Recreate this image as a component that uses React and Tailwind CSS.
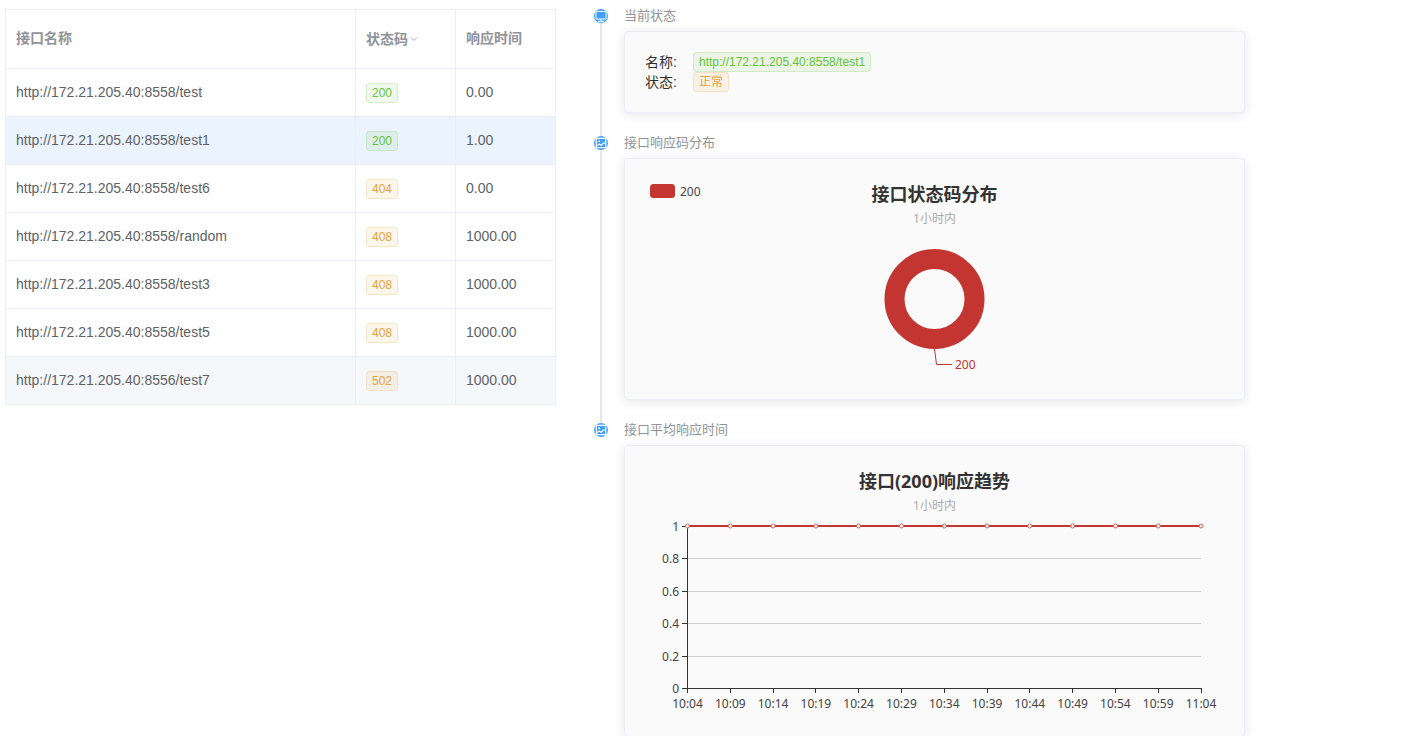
const LATIN = "font-['Liberation_Sans','Noto_Sans_CJK_SC',sans-serif]";

const rows = [
  { url: 'http://172.21.205.40:8558/test', code: 200, time: '0.00' },
  { url: 'http://172.21.205.40:8558/test1', code: 200, time: '1.00', bg: 'bg-[#ebf3ff]' },
  { url: 'http://172.21.205.40:8558/test6', code: 404, time: '0.00' },
  { url: 'http://172.21.205.40:8558/random', code: 408, time: '1000.00' },
  { url: 'http://172.21.205.40:8558/test3', code: 408, time: '1000.00' },
  { url: 'http://172.21.205.40:8558/test5', code: 408, time: '1000.00' },
  { url: 'http://172.21.205.40:8556/test7', code: 502, time: '1000.00', bg: 'bg-[#f5f7fa]' },
];

const times = ['10:04', '10:09', '10:14', '10:19', '10:24', '10:29', '10:34', '10:39', '10:44', '10:49', '10:54', '10:59', '11:04'];
const ticks = [
  { label: '1', y: 60 },
  { label: '0.8', y: 92 },
  { label: '0.6', y: 125 },
  { label: '0.4', y: 157 },
  { label: '0.2', y: 190 },
  { label: '0', y: 222 },
];

function Tag({ type, children }) {
  const tone =
    type === 'success'
      ? 'border-[#67c23a]/20 bg-[#67c23a]/10 text-[#67c23a]'
      : 'border-[#e6a23c]/20 bg-[#e6a23c]/10 text-[#e6a23c]';
  return (
    <span className={`inline-flex h-5 items-center rounded border px-[5px] text-xs whitespace-nowrap ${tone}`}>
      {children}
    </span>
  );
}

function MonitorIcon() {
  return (
    <svg viewBox="0 0 14 14" className="size-3.5" aria-hidden="true">
      <rect x="2" y="2.5" width="10" height="7.5" rx="0.6" fill="none" stroke="#fff" strokeWidth="1" />
      <path d="M7 10v2M4 12.3h6" fill="none" stroke="#fff" strokeWidth="1" />
    </svg>
  );
}

function PictureIcon() {
  return (
    <svg viewBox="0 0 14 14" className="size-3.5" aria-hidden="true">
      <rect x="2.3" y="2.3" width="9.4" height="9.4" rx="0.8" fill="none" stroke="#fff" strokeWidth="1.2" />
      <circle cx="5.2" cy="5.2" r="0.9" fill="#fff" />
      <path d="M3 9.8l2.2-1.9 2 1.5 2.2-2.6 2 .4" fill="none" stroke="#fff" strokeWidth="1.1" />
    </svg>
  );
}

function TimelineItem({ title, icon, last, children }) {
  return (
    <li className="flex gap-4">
      <div className="flex w-3.5 shrink-0 flex-col items-center pt-[3px]">
        <span className="flex size-3.5 shrink-0 items-center justify-center rounded-full bg-[#409eff]">{icon}</span>
        {!last && <span className="-mb-[3px] w-0.5 grow bg-[#e4e7ed]" />}
      </div>
      <section className={`min-w-0 grow ${last ? '' : 'pb-5'}`}>
        <h2 className="mb-[5px] text-[13px] leading-5 text-[#909399]">{title}</h2>
        <div className="rounded border border-[#ebeef5] bg-[#fafafa] p-5 shadow-[0_2px_12px_0_rgba(0,0,0,0.1)]">
          {children}
        </div>
      </section>
    </li>
  );
}

function ChartTitle({ title }) {
  return (
    <g textAnchor="middle">
      <text x="289.5" y="22" fontSize="18" fontWeight="700" fill="#333">{title}</text>
      <text x="289.5" y="44" fontSize="12" fill="#aaa">1小时内</text>
    </g>
  );
}

function PieChart() {
  return (
    <svg viewBox="0 0 579 200" className="block w-full font-['Noto_Sans','Noto_Sans_CJK_SC',sans-serif]" role="img" aria-label="接口状态码分布">
      <rect x="5" y="5" width="25" height="14" rx="3.5" fill="#c23531" />
      <text x="35" y="17" fontSize="12" fill="#444">200</text>
      <ChartTitle title="接口状态码分布" />
      <circle cx="289.5" cy="120" r="40" fill="none" stroke="#c23531" strokeWidth="20" />
      <path d="M289.5 170l2 15.5h15.5" fill="none" stroke="#c23531" />
      <text x="310" y="190" fontSize="12" fill="#c23531">200</text>
    </svg>
  );
}

function TrendChart() {
  const xs = times.map((_, i) => 42.5 + (i * 513.5) / 12);
  return (
    <svg viewBox="0 0 579 250" className="block w-full font-['Noto_Sans','Noto_Sans_CJK_SC',sans-serif]" role="img" aria-label="接口(200)响应趋势">
      <ChartTitle title="接口(200)响应趋势" />
      {ticks.map((t) => (
        <g key={t.label}>
          <path d={`M42 ${t.y + 0.5}H556`} stroke="#ccc" />
          <path d={`M37 ${t.y + 0.5}h5`} stroke="#333" />
          <text x="34" y={t.y + 5} fontSize="12" textAnchor="end" fill="#444">{t.label}</text>
        </g>
      ))}
      <path d="M42.5 60V223M42 222.5H557" stroke="#333" fill="none" />
      {times.map((t, i) => (
        <g key={t}>
          <path d={`M${Math.floor(xs[i]) + 0.5} 223v4`} stroke="#333" />
          <text x={xs[i]} y="242" fontSize="12" textAnchor="middle" fill="#444">{t}</text>
        </g>
      ))}
      <path d="M42.5 60H556" stroke="#c23531" strokeWidth="2" />
      {xs.map((x) => (
        <circle key={x} cx={x} cy="60" r="2" fill="#fff" stroke="#d4605d" strokeWidth="1" />
      ))}
    </svg>
  );
}

export default function App() {
  const cell = 'border-r border-b border-[#ebeef5] px-2.5 pt-0';
  const textCell = `${cell} pb-0.5`;
  return (
    <main className={`flex items-start gap-[38px] bg-white pl-[5px] ${LATIN}`}>
      <table className="mt-[9px] w-[551px] shrink-0 table-fixed border-separate border-spacing-0 border-t border-l border-[#ebeef5] text-left text-sm text-[#606266]">
        <colgroup>
          <col />
          <col className="w-[100px]" />
          <col className="w-[100px]" />
        </colgroup>
        <thead className="text-[#909399]">
          <tr className="h-[59px]">
            <th className={textCell}>接口名称</th>
            <th className={cell}>
              <button type="button" className="flex items-center gap-0.5 font-bold">
                状态码
                <svg viewBox="0 0 8 8" className="size-2" aria-hidden="true">
                  <path d="M1 2.5l3 3 3-3" fill="none" stroke="#a5a8ae" />
                </svg>
              </button>
            </th>
            <th className={textCell}>响应时间</th>
          </tr>
        </thead>
        <tbody>
          {rows.map((r) => (
            <tr key={r.url} className={`h-12 ${r.bg || ''}`}>
              <td className={textCell}>{r.url}</td>
              <td className={cell}>
                <div className="flex">
                  <Tag type={r.code === 200 ? 'success' : 'warning'}>{r.code}</Tag>
                </div>
              </td>
              <td className={textCell}>{r.time}</td>
            </tr>
          ))}
        </tbody>
      </table>

      <ul className="mt-1.5 max-w-[651px] min-w-0 grow">
        <TimelineItem title="当前状态" icon={<MonitorIcon />}>
          <dl className="grid grid-cols-[32px_1fr] gap-x-4 text-sm leading-5 text-[#303133]">
            <dt>名称:</dt>
            <dd className="flex"><Tag type="success">http://172.21.205.40:8558/test1</Tag></dd>
            <dt>状态:</dt>
            <dd className="flex"><Tag type="warning">正常</Tag></dd>
          </dl>
        </TimelineItem>
        <TimelineItem title="接口响应码分布" icon={<PictureIcon />}>
          <PieChart />
        </TimelineItem>
        <TimelineItem title="接口平均响应时间" icon={<PictureIcon />} last>
          <TrendChart />
        </TimelineItem>
      </ul>
    </main>
  );
}
